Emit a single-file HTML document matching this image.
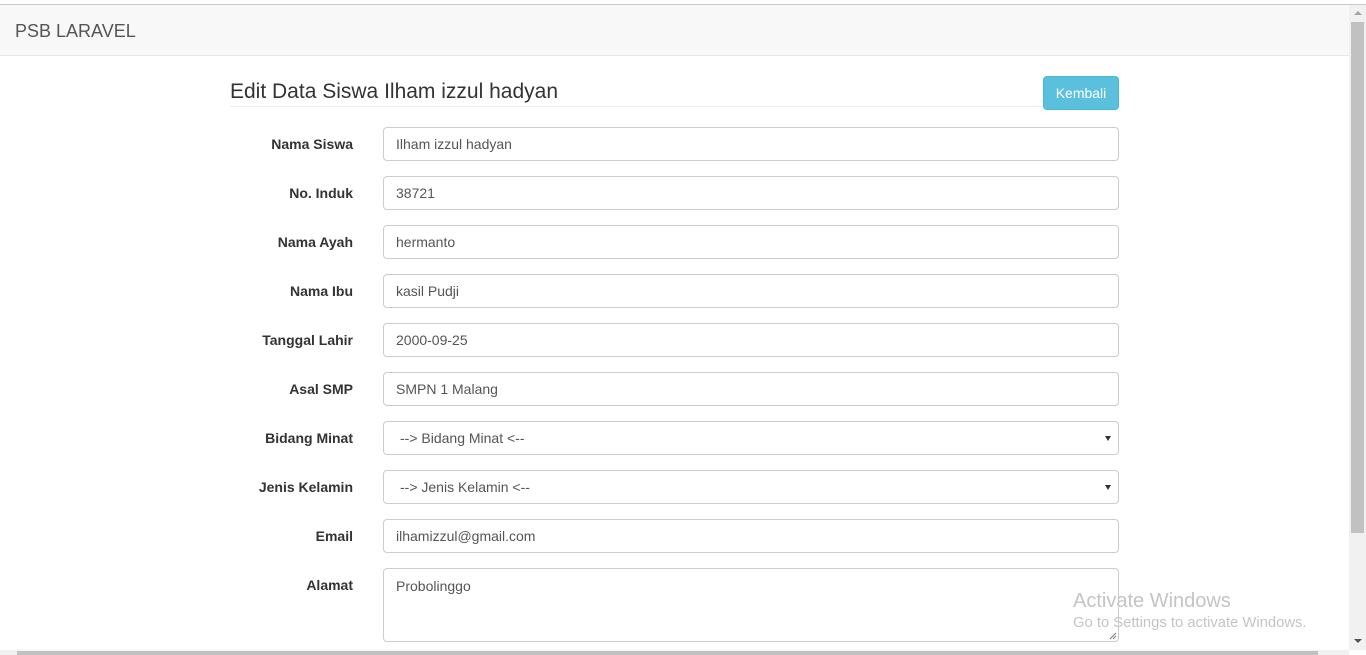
<!DOCTYPE html>
<html><head><meta charset="utf-8"><style>
*{box-sizing:border-box}
body{margin:0;width:1366px;height:655px;overflow:hidden;background:#fff;font-family:"Liberation Sans",Arial,sans-serif;font-size:14px;color:#333;position:relative}
.topline{position:absolute;left:0;top:0;width:1366px;height:5px;background:#fff;border-bottom:1px solid #c8c8c8}
.nav{position:absolute;left:0;top:5px;width:1349px;height:51px;background:#f8f8f8;border-bottom:1px solid #e7e7e7}
.brand{position:absolute;left:15px;top:16px;font-size:18px;color:#555}
h3{position:absolute;left:230px;top:80px;margin:0;font-weight:normal;font-size:21px;color:#333}
.hr{position:absolute;left:230px;top:106px;width:888px;height:1px;background:#eee}
.btn{position:absolute;left:1043px;top:76px;width:76px;height:34px;background:#5bc0de;border:1px solid #46b8da;border-radius:4px;color:#fff;font-size:14px;text-align:center;line-height:32px}
.lbl{position:absolute;right:1013px;font-weight:bold;font-size:14px;line-height:34px;color:#333}
.in{position:absolute;left:383px;width:736px;height:34px;border:1px solid #ccc;border-radius:4px;padding:0 12px;line-height:32px;color:#555;background:#fff}
.sel:after{content:"";position:absolute;right:7px;top:14px;border-left:3px solid transparent;border-right:3px solid transparent;border-top:5px solid #333}
.vs{position:absolute;left:1349px;top:5px;width:17px;height:645px;background:#f1f1f1}
.vt{position:absolute;left:1351px;top:22px;width:13px;height:511px;background:#c1c1c1}
.hs{position:absolute;left:0;top:650px;width:1349px;height:5px;background:#f1f1f1}
.ht{position:absolute;left:17px;top:651px;width:1301px;height:4px;background:#c1c1c1}
.wm1{position:absolute;left:1073px;top:590px;font-size:20px;color:#c4c4c4}
.wm2{position:absolute;left:1073px;top:615px;font-size:14.8px;color:#c4c4c4}
</style></head><body>
<div class="topline"></div>
<div class="nav"><div class="brand">PSB LARAVEL</div></div>
<h3>Edit Data Siswa Ilham izzul hadyan</h3>
<div class="hr"></div>
<div class="btn">Kembali</div>

<div class="lbl" style="top:127px">Nama Siswa</div><div class="in" style="top:127px">Ilham izzul hadyan</div>
<div class="lbl" style="top:176px">No. Induk</div><div class="in" style="top:176px">38721</div>
<div class="lbl" style="top:225px">Nama Ayah</div><div class="in" style="top:225px">hermanto</div>
<div class="lbl" style="top:274px">Nama Ibu</div><div class="in" style="top:274px">kasil Pudji</div>
<div class="lbl" style="top:323px">Tanggal Lahir</div><div class="in" style="top:323px">2000-09-25</div>
<div class="lbl" style="top:372px">Asal SMP</div><div class="in" style="top:372px">SMPN 1 Malang</div>
<div class="lbl" style="top:421px">Bidang Minat</div><div class="in sel" style="top:421px;padding-left:16px">--&gt; Bidang Minat &lt;--</div>
<div class="lbl" style="top:470px">Jenis Kelamin</div><div class="in sel" style="top:470px;padding-left:16px">--&gt; Jenis Kelamin &lt;--</div>
<div class="lbl" style="top:519px">Email</div><div class="in" style="top:519px">ilhamizzul@gmail.com</div>
<div class="lbl" style="top:568px">Alamat</div><div class="in" style="top:568px;height:74px;line-height:34px">Probolinggo</div>
<svg style="position:absolute;left:1109px;top:632px" width="8" height="8"><path d="M1 7L7 1M4 7L7 4" stroke="#777" stroke-width="1"/></svg>

<div class="wm1">Activate Windows</div>
<div class="wm2">Go to Settings to activate Windows.</div>
<div class="vs"></div><div class="vt"></div>
<svg style="position:absolute;left:1353px;top:10px" width="10" height="6"><path d="M1 5L5 1L9 5Z" fill="#a3a3a3"/></svg>
<svg style="position:absolute;left:1353px;top:638px" width="10" height="6"><path d="M1 1L5 5L9 1Z" fill="#505050"/></svg>
<div class="hs"></div><div class="ht"></div>
</body></html>
